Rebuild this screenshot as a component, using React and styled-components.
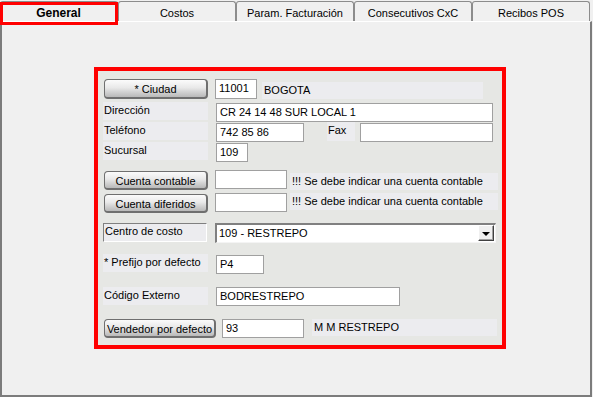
import React from 'react';
import styled, { createGlobalStyle, css } from 'styled-components';

const GlobalStyle = createGlobalStyle`
  html, body {
    margin: 0;
    padding: 0;
    background: #f0f0f0;
  }
  body {
    font-family: "Liberation Sans", Arial, sans-serif;
    font-size: 11px;
    color: #000;
  }
`;

const Window = styled.div`
  width: 593px;
  height: 397px;
  background: #f0f0f0;
  display: flex;
  flex-direction: column;
  overflow: hidden;
`;

const TabStrip = styled.div`
  display: flex;
  height: 21px;
  padding-top: 1px;
  box-sizing: border-box;
  position: relative;
  z-index: 2;
`;

const Tab = styled.div`
  width: 118px;
  box-sizing: border-box;
  display: flex;
  align-items: center;
  justify-content: center;
  background: #f0f0f0;
  border: 1px solid #8c8c8c;
  border-bottom: none;
  border-left: ${p => (p.$first ? 'none' : '1px solid #8c8c8c')};
  border-radius: 3px 3px 0 0;
  font-weight: ${p => (p.$active ? 'bold' : 'normal')};
  font-size: ${p => (p.$active ? '12px' : '11px')};
  position: relative;
  padding-top: 2px;

  ${p => p.$active && css`
    &::after {
      content: '';
      position: absolute;
      left: 0;
      top: 0;
      right: -1px;
      bottom: -4px;
      border: 3px solid #ff0000;
      pointer-events: none;
    }
  `}
`;

const Panel = styled.div`
  flex: 1;
  margin-right: 1px;
  border-left: 2px solid #7c7c7c;
  border-right: 2px solid #7c7c7c;
  border-bottom: 2px solid #7c7c7c;
  border-top: 1px solid #ffffff;
  box-sizing: border-box;
  padding: 45px 0 0 92px;
`;

const Frame = styled.div`
  width: 412px;
  height: 282px;
  box-sizing: border-box;
  border: 4px solid #ff0000;
  background: #e6e7e4;
  padding: 8px 4px 0 5px;
  display: flex;
  flex-direction: column;
`;

const Row = styled.div`
  display: flex;
  align-items: flex-start;
  height: ${p => p.$h || 19}px;
  margin-top: ${p => p.$top || 0}px;
`;

const Label = styled.div`
  width: ${p => p.$w || 105}px;
  height: ${p => p.$h || 18}px;
  background: #ececef;
  box-sizing: border-box;
  padding: 2px 0 0 1px;
  margin-left: ${p => p.$left || 0}px;
  margin-top: ${p => p.$dy || 0}px;
  white-space: nowrap;
  flex-shrink: 0;
`;

const SunkenLabel = styled(Label)`
  border-top: 1px solid #808080;
  border-left: 1px solid #808080;
  border-right: 1px solid #ffffff;
  border-bottom: 1px solid #ffffff;
  padding: 1px 0 0 1px;
`;

const Button = styled.div`
  width: ${p => p.$w || 104}px;
  height: ${p => p.$h || 19}px;
  margin-left: 1px;
  box-sizing: border-box;
  border: 1px solid #6f6f6f;
  border-radius: 4px;
  border-right-width: 2px;
  border-bottom-width: 2px;
  background: linear-gradient(#fbfbfb 0%, #e9e9e9 45%, #d2d2d2 70%, #b9b9b9 100%);
  display: flex;
  align-items: center;
  justify-content: center;
  white-space: nowrap;
  flex-shrink: 0;
  padding-top: 1px;
`;

const Input = styled.div`
  width: ${p => p.$w}px;
  height: ${p => p.$h || 19}px;
  margin-left: ${p => p.$left || 8}px;
  margin-top: ${p => p.$dy || 0}px;
  box-sizing: border-box;
  background: #ffffff;
  border: 1px solid #a0a0a0;
  padding: 2px 0 0 3px;
  white-space: nowrap;
  flex-shrink: 0;
`;

const Note = styled.div`
  width: ${p => p.$w}px;
  height: ${p => p.$h || 17}px;
  margin-left: ${p => p.$left || 3}px;
  margin-top: ${p => p.$dy || 0}px;
  background: #ececef;
  box-sizing: border-box;
  padding: 2px 0 0 2px;
  white-space: nowrap;
`;

const Select = styled.div`
  width: 281px;
  height: 20px;
  margin-left: 8px;
  box-sizing: border-box;
  background: #ffffff;
  border-top: 2px solid #808080;
  border-left: 2px solid #808080;
  border-right: 1px solid #f4f4f4;
  border-bottom: 1px solid #f4f4f4;
  display: flex;
  align-items: stretch;
`;

const SelectText = styled.div`
  flex: 1;
  padding: 2px 0 0 2px;
`;

const SelectArrow = styled.div`
  width: 16px;
  box-sizing: border-box;
  margin: 0 1px 1px 0;
  background: #f0f0f0;
  border-top: 1px solid #ffffff;
  border-left: 1px solid #ffffff;
  border-right: 1px solid #404040;
  border-bottom: 1px solid #404040;
  box-shadow: inset -1px -1px 0 #a0a0a0;
  display: flex;
  align-items: center;
  justify-content: center;

  &::after {
    content: '';
    border-left: 4px solid transparent;
    border-right: 4px solid transparent;
    border-top: 4px solid #000;
    margin-top: 1px;
  }
`;

const tabs = ['General', 'Costos', 'Param. Facturación', 'Consecutivos CxC', 'Recibos POS'];

export default function App() {
  return (
    <>
      <GlobalStyle />
      <Window>
        <TabStrip>
          {tabs.map((t, i) => (
            <Tab key={t} $active={i === 0} $first={i === 0}>{t}</Tab>
          ))}
        </TabStrip>
        <Panel>
          <Frame>
            <Row $h={20}>
              <Button $h={20}>* Ciudad</Button>
              <Input $w={42} $h={20} $left={7}>11001</Input>
              <Note $w={221} $dy={3} $left={5}>BOGOTA</Note>
            </Row>
            <Row $top={3}>
              <Label>Dirección</Label>
              <Input $w={277} $left={8} $dy={1}>CR 24 14 48 SUR LOCAL 1</Input>
            </Row>
            <Row $top={1}>
              <Label>Teléfono</Label>
              <Input $w={88} $dy={1}>742 85 86</Input>
              <Label $w={28} $h={19} $left={23}>Fax</Label>
              <Input $w={133} $left={5} $dy={1}></Input>
            </Row>
            <Row $top={1}>
              <Label>Sucursal</Label>
              <Input $w={32} $dy={1}>109</Input>
            </Row>
            <Row $top={10}>
              <Button>Cuenta contable</Button>
              <Input $w={72} $left={7} $dy={-1}></Input>
              <Note $w={209} $dy={2}>!!! Se debe indicar una cuenta contable</Note>
            </Row>
            <Row $top={4}>
              <Button>Cuenta diferidos</Button>
              <Input $w={72} $left={7} $dy={-1}></Input>
              <Note $w={209} $dy={-1}>!!! Se debe indicar una cuenta contable</Note>
            </Row>
            <Row $top={10} $h={20}>
              <SunkenLabel $w={104} $h={19}>Centro de costo</SunkenLabel>
              <Select>
                <SelectText>109 - RESTREPO</SelectText>
                <SelectArrow />
              </Select>
            </Row>
            <Row $top={11}>
              <Label>* Prefijo por defecto</Label>
              <Input $w={48} $dy={1}>P4</Input>
            </Row>
            <Row $top={14}>
              <Label>Código Externo</Label>
              <Input $w={184}>BODRESTREPO</Input>
            </Row>
            <Row $top={13}>
              <Button $w={112}>Vendedor por defecto</Button>
              <Input $w={82} $left={6}>93</Input>
              <Note $w={185} $left={8}>M M RESTREPO</Note>
            </Row>
          </Frame>
        </Panel>
      </Window>
    </>
  );
}
